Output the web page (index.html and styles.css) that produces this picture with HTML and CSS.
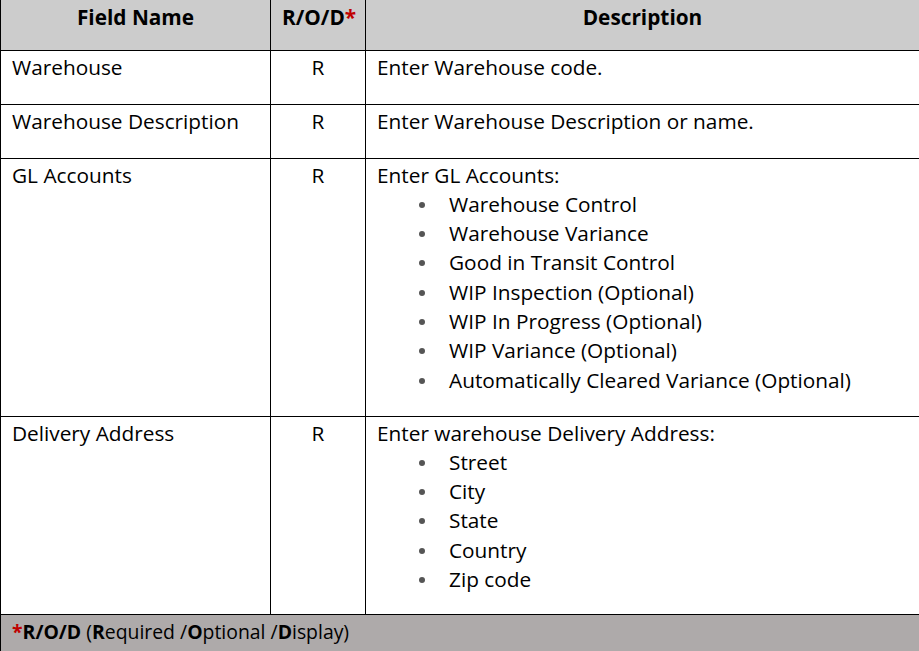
FILE: index.html
```html
<!DOCTYPE html>
<html>
<head>
<meta charset="utf-8">
<link rel="stylesheet" href="styles.css">
</head>
<body>
<table class="fields">
  <colgroup>
    <col class="c-name">
    <col class="c-rod">
    <col class="c-desc">
  </colgroup>
  <thead>
    <tr class="r-head">
      <th>Field Name</th>
      <th>R/O/D<span class="star">*</span></th>
      <th>Description</th>
    </tr>
  </thead>
  <tbody>
    <tr class="r-single">
      <td>Warehouse</td>
      <td class="rod">R</td>
      <td>Enter Warehouse code.</td>
    </tr>
    <tr class="r-single">
      <td>Warehouse Description</td>
      <td class="rod">R</td>
      <td>Enter Warehouse Description or name.</td>
    </tr>
    <tr class="r-gl">
      <td>GL Accounts</td>
      <td class="rod">R</td>
      <td>Enter GL Accounts:
        <ul class="bullets">
          <li>Warehouse Control</li>
          <li>Warehouse Variance</li>
          <li>Good in Transit Control</li>
          <li>WIP Inspection (Optional)</li>
          <li>WIP In Progress (Optional)</li>
          <li>WIP Variance (Optional)</li>
          <li>Automatically Cleared Variance (Optional)</li>
        </ul>
      </td>
    </tr>
    <tr class="r-addr">
      <td>Delivery Address</td>
      <td class="rod">R</td>
      <td>Enter warehouse Delivery Address:
        <ul class="bullets">
          <li>Street</li>
          <li>City</li>
          <li>State</li>
          <li>Country</li>
          <li>Zip code</li>
        </ul>
      </td>
    </tr>
  </tbody>
  <tfoot>
    <tr>
      <td colspan="3"><span class="star">*</span><b>R/O/D</b> (<b>R</b>equired /<b>O</b>ptional /<b>D</b>isplay)</td>
    </tr>
  </tfoot>
</table>
</body>
</html>
```
FILE: styles.css
```css
html, body {
  margin: 0;
  padding: 0;
  background: #ffffff;
}
body {
  font-family: "Open Sans", "Noto Sans", sans-serif;
  font-size: 20.8px;
  color: #000;
}
.fields {
  border-collapse: collapse;
  width: 919px;
  table-layout: fixed;
}
.c-name { width: 270px; }
.c-rod { width: 95px; }
.c-desc { width: 554px; }
.fields th,
.fields td {
  border: 1px solid #000;
  vertical-align: top;
  text-align: left;
  line-height: 29.3px;
  padding: 2px 11px 0 11px;
  box-sizing: border-box;
}
.fields thead th {
  border-top: none;
  background: #cccccc;
  font-weight: 700;
  text-align: center;
  padding: 3px 11px 0 11px;
}
.r-head th { height: 50px; }
.r-single td { height: 54px; }
.r-gl td { height: 258px; }
.r-addr td { height: 198px; }
.fields td.rod {
  text-align: center;
}
.star {
  color: #c00000;
  font-weight: 700;
}
.bullets {
  margin: 0;
  padding: 0 0 0 72px;
  list-style: none;
}
.bullets li {
  position: relative;
}
.bullets li::before {
  content: "";
  position: absolute;
  left: -30px;
  top: 12px;
  width: 6px;
  height: 6px;
  border-radius: 50%;
  background: #555;
}
.fields tfoot td {
  background: #aeaaaa;
  padding: 2px 11px 6px 11px;
  border-bottom: none;
  height: 40px;
  font-size: 19.4px;
}
```
